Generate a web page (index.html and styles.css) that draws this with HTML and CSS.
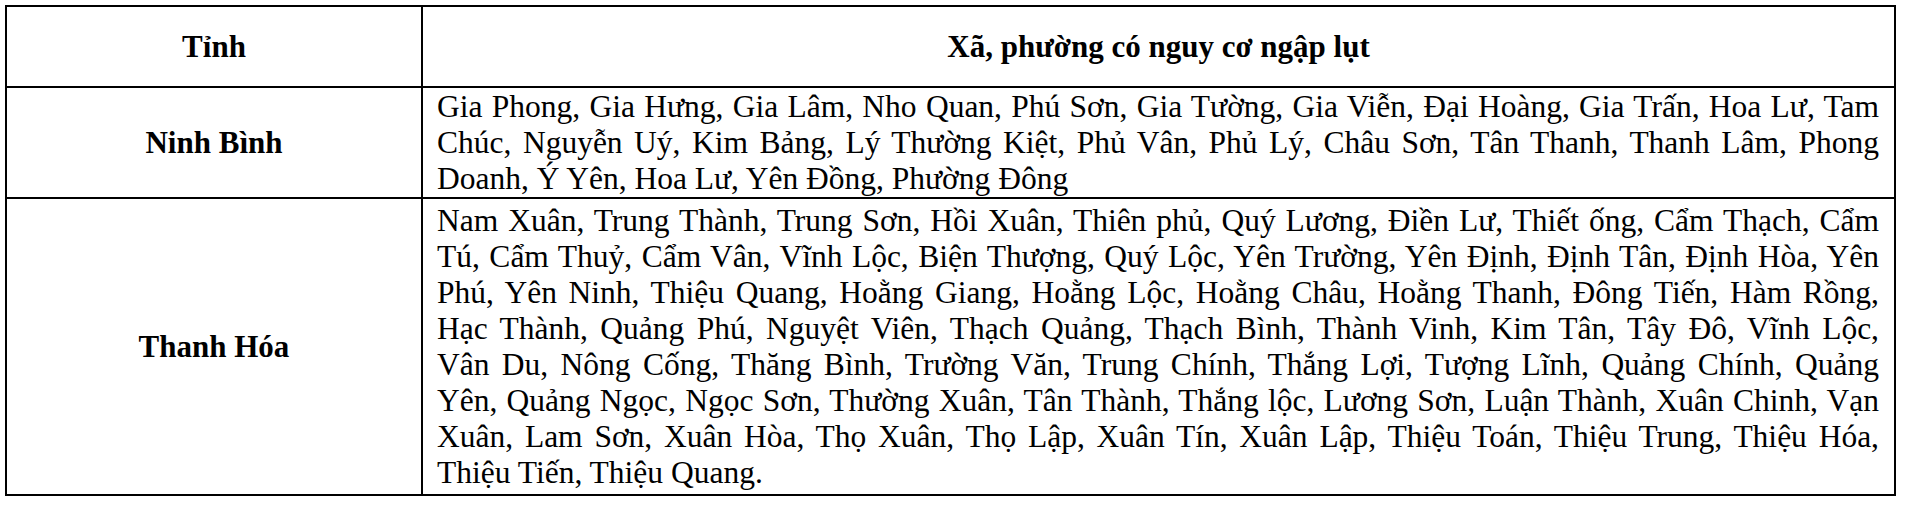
FILE: index.html
```html
<!DOCTYPE html>
<html lang="vi">
<head>
<meta charset="utf-8">
<title>Xã, phường có nguy cơ ngập lụt</title>
<link rel="stylesheet" href="styles.css">
</head>
<body>
<table class="flood-table">
  <colgroup>
    <col class="col-province">
    <col class="col-wards">
  </colgroup>
  <thead>
    <tr class="row-head">
      <th>Tỉnh</th>
      <th>Xã, phường có nguy cơ ngập lụt</th>
    </tr>
  </thead>
  <tbody>
    <tr class="row-ninhbinh">
      <td class="province">Ninh Bình</td>
      <td class="wards">
        <span class="line">Gia Phong, Gia Hưng, Gia Lâm, Nho Quan, Phú Sơn, Gia Tường, Gia Viễn, Đại Hoàng, Gia Trấn, Hoa Lư, Tam</span>
        <span class="line">Chúc, Nguyễn Uý, Kim Bảng, Lý Thường Kiệt, Phủ Vân, Phủ Lý, Châu Sơn, Tân Thanh, Thanh Lâm, Phong</span>
        <span class="line last">Doanh, Ý Yên, Hoa Lư, Yên Đồng, Phường Đông</span>
      </td>
    </tr>
    <tr class="row-thanhhoa">
      <td class="province">Thanh Hóa</td>
      <td class="wards">
        <span class="line">Nam Xuân, Trung Thành, Trung Sơn, Hồi Xuân, Thiên phủ, Quý Lương, Điền Lư, Thiết ống, Cẩm Thạch, Cẩm</span>
        <span class="line">Tú, Cẩm Thuỷ, Cẩm Vân, Vĩnh Lộc, Biện Thượng, Quý Lộc, Yên Trường, Yên Định, Định Tân, Định Hòa, Yên</span>
        <span class="line">Phú, Yên Ninh, Thiệu Quang, Hoằng Giang, Hoằng Lộc, Hoằng Châu, Hoằng Thanh, Đông Tiến, Hàm Rồng,</span>
        <span class="line">Hạc Thành, Quảng Phú, Nguyệt Viên, Thạch Quảng, Thạch Bình, Thành Vinh, Kim Tân, Tây Đô, Vĩnh Lộc,</span>
        <span class="line">Vân Du, Nông Cống, Thăng Bình, Trường Văn, Trung Chính, Thắng Lợi, Tượng Lĩnh, Quảng Chính, Quảng</span>
        <span class="line">Yên, Quảng Ngọc, Ngọc Sơn, Thường Xuân, Tân Thành, Thắng lộc, Lương Sơn, Luận Thành, Xuân Chinh, Vạn</span>
        <span class="line">Xuân, Lam Sơn, Xuân Hòa, Thọ Xuân, Thọ Lập, Xuân Tín, Xuân Lập, Thiệu Toán, Thiệu Trung, Thiệu Hóa,</span>
        <span class="line last">Thiệu Tiến, Thiệu Quang.</span>
      </td>
    </tr>
  </tbody>
</table>
</body>
</html>
```

FILE: styles.css
```css
html, body {
  margin: 0;
  padding: 0;
  background: #ffffff;
}

body {
  font-family: "Liberation Serif", "Times New Roman", serif;
  color: #000000;
}

.flood-table {
  border-collapse: collapse;
  table-layout: fixed;
  margin: 5px 0 0 5px;
  width: 1891px;
  font-size: 31px;
  line-height: 36px;
}

.col-province {
  width: 416px;
}

.flood-table th,
.flood-table td {
  border: 2px solid #000000;
  padding: 0;
  vertical-align: middle;
}

.flood-table th {
  font-weight: bold;
  text-align: center;
}

.row-head {
  height: 81px;
}

.row-ninhbinh {
  height: 111px;
}

.row-thanhhoa {
  height: 297px;
}

.flood-table .province {
  font-weight: bold;
  text-align: center;
}

.flood-table .wards {
  padding: 0 15px 0 14px;
  font-size: 31.5px;
}

.line {
  display: block;
  text-align: justify;
  text-align-last: justify;
}

.line.last {
  text-align-last: left;
}
```
